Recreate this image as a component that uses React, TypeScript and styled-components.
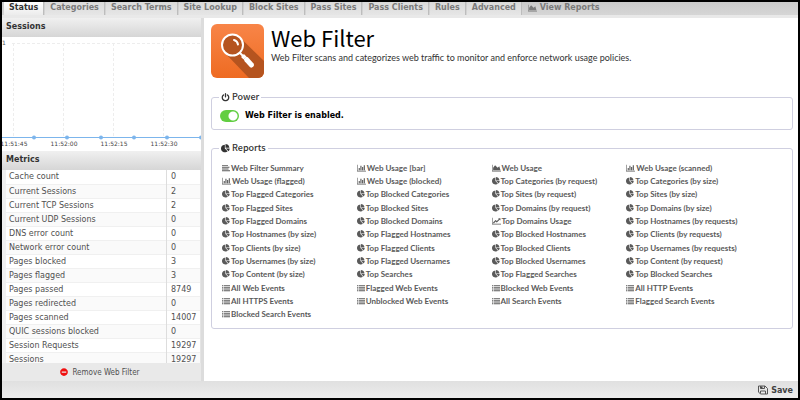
import React from "react";
import styled, { createGlobalStyle, css } from "styled-components";
import { FaMinusCircle } from "react-icons/fa";

const ui = `"DejaVu Sans", Verdana, sans-serif`;
const uiCondensed = `"DejaVu Sans Condensed", "DejaVu Sans", sans-serif`;
const humanist = `"Noto Sans CJK SC", "Source Sans Pro", sans-serif`;
const humanistText = `Lato, "Source Sans Pro", sans-serif`;

const GlobalStyle = createGlobalStyle`
  * { box-sizing: border-box; }
  body { margin: 0; background: #000; font-family: ${ui}; font-size: 8px; color: #505050; }
  button { font: inherit; color: inherit; background: none; border: 0; padding: 0; cursor: pointer; }
`;

const Frame = styled.div`
  height: 100vh;
  padding: 2px;
  display: flex;
  flex-direction: column;
`;

const TabBar = styled.nav`
  flex: none;
  height: 16px;
  display: flex;
  gap: 2px;
  padding-left: 2px;
  background: linear-gradient(#cbcbcb, #d6d6d6);
  border-bottom: 3px solid #e9e9e9;
`;

const Tab = styled.button<{ $active?: boolean; $plain?: boolean }>`
  display: flex;
  align-items: center;
  gap: 3px;
  height: 13px;
  padding: 0 5px 2px;
  font-size: 8px;
  font-weight: bold;
  line-height: 10px;
  white-space: nowrap;
  color: ${(p) => (p.$active ? "#333" : "#7a7a7a")};
  ${(p) =>
    !p.$plain &&
    css`
      background: ${p.$active ? "linear-gradient(#fff, #ececec)" : "linear-gradient(#dadada, #e6e6e6)"};
      box-shadow: 1px 0 0 #bdbdbd;
    `}
`;

const Body = styled.div`
  flex: 1;
  min-height: 0;
  display: flex;
`;

const Sidebar = styled.aside`
  flex: 0 0 25%;
  min-width: 0;
  display: flex;
  flex-direction: column;
  background: #fff;
`;

const PanelTitle = styled.h2`
  flex: none;
  margin: 0;
  height: 19px;
  padding: 0 4px;
  font-size: 8px;
  line-height: 17px;
  color: #333;
  background: linear-gradient(#f0f0f0, #d6d6d6);
`;

const Chart = styled.svg`
  flex: none;
  display: block;
  width: 100%;
  height: auto;
  font-family: ${ui};
  font-size: 6px;
`;

const MetricsScroll = styled.div`
  flex: 1;
  min-height: 0;
  overflow: hidden;
`;

const MetricsTable = styled.table`
  width: 100%;
  border-collapse: collapse;
  table-layout: fixed;
  line-height: 13px;
  tr { height: 14px; border-bottom: 1px solid #f0f0f0; }
  tr:nth-child(even) { background: #fafafa; }
  th, td { padding: 0 4px; font-weight: normal; text-align: left; white-space: nowrap; }
  th { border-left: 4px solid #f0f0f0; padding-left: 3px; }
  td { width: 34px; border-left: 1px solid #ddd; border-right: 1px solid #e4e4e4; }
`;

const RemoveButton = styled.button`
  flex: none;
  height: 18px;
  display: flex;
  align-items: center;
  justify-content: center;
  gap: 4px;
  padding-right: 3px;
  font-family: ${uiCondensed};
  background: #e9e9e9;
  svg { color: #f01010; }
`;

const Splitter = styled.div`
  flex: 0 0 3px;
  background: #dcdcdc;
`;

const Main = styled.main`
  flex: 1;
  min-width: 0;
  padding: 6px 5px 0 7px;
  background: #fff;
  color: #333;
  font-family: ${humanist};
`;

const Header = styled.header`
  display: flex;
  gap: 7px;
  margin-bottom: 13px;
`;

const Title = styled.h1`
  margin: 0;
  font-size: 22px;
  font-weight: normal;
  line-height: 27px;
  color: #000;
`;

const Description = styled.p`
  margin: 0;
  font-family: ${humanistText};
  font-size: 9px;
  line-height: 14px;
`;

const Group = styled.fieldset<{ $roomy?: boolean }>`
  margin: 0 0 12px;
  padding: ${(p) => (p.$roomy ? "7px 31px 7px 10px" : "6px 8px 7px")};
  border: 1px solid #cfcfe0;
  border-radius: 3px;
  min-width: 0;
`;

const Legend = styled.legend<{ $indent?: boolean }>`
  display: flex;
  align-items: center;
  gap: 2px;
  padding: 0 2px;
  margin-left: ${(p) => (p.$indent ? "-1px" : "-3px")};
  font-size: 9px;
  font-weight: 500;
  line-height: 12px;
`;

const PowerRow = styled.label`
  display: flex;
  align-items: center;
  gap: 6px;
  height: 13px;
  font-family: ${ui};
  font-size: 8px;
  font-weight: bold;
  color: #000;
`;

const Toggle = styled.input`
  appearance: none;
  margin: 0;
  width: 19px;
  height: 12px;
  border-radius: 6px;
  background: radial-gradient(circle at 13px 6px, #fff 4px, #62ce42 5px);
`;

const ReportGrid = styled.div`
  display: grid;
  grid-template-columns: repeat(4, 1fr);
  grid-template-rows: repeat(12, 1fr);
  min-height: 160px;
`;

const ReportButton = styled.button`
  display: flex;
  align-items: center;
  gap: 1px;
  min-width: 0;
  white-space: nowrap;
  font-family: ${humanistText};
  font-size: 8px;
  font-weight: bold;
  line-height: 12px;
  color: #5a5a5a;
`;

const Footer = styled.footer`
  flex: none;
  height: 17px;
  display: flex;
  justify-content: flex-end;
  padding-right: 5px;
  background: linear-gradient(#e0e0e0, #ececec);
`;

const SaveButton = styled.button`
  display: flex;
  align-items: center;
  gap: 3px;
  padding-top: 1px;
  font-weight: bold;
  color: #404040;
`;

const glyphs = {
  pie: { w: 1792, d: "M768 890l546 546q-106 108-247.5 168t-298.5 60q-209 0-385.5-103t-279.5-279.5-103-385.5 103-385.5 279.5-279.5 385.5-103v762zm187 6h773q0 157-60 298.5t-168 247.5zm709-128h-768v-768q209 0 385.5 103t279.5 279.5 103 385.5z" },
  bar: { w: 2048, d: "M640 896v512h-256v-512h256zm384-512v1024h-256v-1024h256zm1024 1152v128h-2048v-1536h128v1408h1920zm-640-896v768h-256v-768h256zm384-384v1152h-256v-1152h256z" },
  area: { w: 2048, d: "M2048 1536v128h-2048v-1536h128v1408h1920zm-384-1024l256 896h-1664v-576l448-576 576 576z" },
  line: { w: 2048, d: "M2048 1536v128h-2048v-1536h128v1408h1920zm-128-1248v435q0 21-19.5 29.5t-35.5-7.5l-121-121-633 633q-10 10-23 10t-23-10l-233-233-416 416-192-192 585-585q10-10 23-10t23 10l233 233 464-464-121-121q-16-16-7.5-35.5t29.5-19.5h435q14 0 23 9t9 23z" },
  list: { w: 1792, d: "M0 256h256v192h-256zM384 256h1408v192h-1408zM0 640h256v192h-256zM384 640h1408v192h-1408zM0 1024h256v192h-256zM384 1024h1408v192h-1408zM0 1408h256v192h-256zM384 1408h1408v192h-1408z" },
  text: { w: 1792, d: "M0 256h1344v192h-1344zM0 640h1664v192h-1664zM0 1024h1472v192h-1472zM0 1408h1792v192h-1792z" },
  power: { w: 1792, d: "M1664 896q0 156-61 298t-164 245-245 164-298 61-298-61-245-164-164-245-61-298q0-182 80.5-343t226.5-270q43-32 95.5-25t83.5 50q32 42 24.5 94.500t-49.500 84.500q-98 74-151.500 181t-53.500 228q0 104 40.500 198.500t109.500 163.500 163.500 109.500 198.500 40.500 198.500-40.500 163.500-109.500 109.500-163.500 40.500-198.500q0-121-53.500-228t-151.500-181q-42-32-49.500-84.500t24.500-94.500q31-43 84-50t95 25q146 109 226.500 270t80.500 343zm-640-768v640q0 52-38 90t-90 38-90-38-38-90v-640q0-52 38-90t90-38 90 38 38 90z" },
};
type GlyphName = keyof typeof glyphs;

const GlyphSvg = styled.svg`
  flex: none;
  fill: currentColor;
`;

const Glyph = ({ name, size = 8 }: { name: GlyphName; size?: number }) => {
  const { w, d } = glyphs[name];
  return (
    <GlyphSvg width={w > 1792 ? size + 1 : size} height={size} viewBox={`0 0 ${w} 1792`} aria-hidden="true">
      <path d={d} />
    </GlyphSvg>
  );
};

const SaveIcon = () => (
  <svg width="10" height="10" viewBox="0 0 20 20" fill="none" stroke="#555" strokeWidth="2" aria-hidden="true">
    <path d="M1 2h13l5 5v11H5l-4-4z" />
    <path d="M5 2v5h8V2M5 17v-5h10v6" />
    <path d="M5 3h4v4H5z" fill="#444" stroke="none" />
  </svg>
);

const Logo = () => (
  <svg width="53" height="54" viewBox="0 0 53 54" aria-hidden="true">
    <defs>
      <linearGradient id="logoFill" x1="0" y1="0" x2="0" y2="1">
        <stop offset="0" stopColor="#f88548" />
        <stop offset="1" stopColor="#ee6b22" />
      </linearGradient>
      <clipPath id="logoClip">
        <rect width="53" height="54" rx="6" />
      </clipPath>
    </defs>
    <g clipPath="url(#logoClip)">
      <rect width="53" height="54" fill="url(#logoFill)" />
      <path d="M29 13.500L53 37v17H38L14 29z" fill="#b5541f" />
      <circle cx="21.500" cy="21" r="10.500" fill="#b5541f" stroke="#fff" strokeWidth="2" />
      <path d="M23 16q3.500 1 4 4.500" fill="none" stroke="#fff" strokeWidth="2" strokeLinecap="round" />
      <path d="M28.500 28.500l4 4" stroke="#fff" strokeWidth="2" />
      <path d="M31.500 31.500l2.500 2.500" stroke="#fff" strokeWidth="4" />
      <path d="M35.500 35.500l5 5.500" stroke="#fff" strokeWidth="5" strokeLinecap="round" />
    </g>
  </svg>
);

const tabs = ["Status", "Categories", "Search Terms", "Site Lookup", "Block Sites", "Pass Sites", "Pass Clients", "Rules", "Advanced"];

const metrics: [string, number][] = [
  ["Cache count", 0],
  ["Current Sessions", 2],
  ["Current TCP Sessions", 2],
  ["Current UDP Sessions", 0],
  ["DNS error count", 0],
  ["Network error count", 0],
  ["Pages blocked", 3],
  ["Pages flagged", 3],
  ["Pages passed", 8749],
  ["Pages redirected", 0],
  ["Pages scanned", 14007],
  ["QUIC sessions blocked", 0],
  ["Session Requests", 19297],
  ["Sessions", 19297],
];

const reports: [GlyphName, string][] = [
  ["text", "Web Filter Summary"], ["bar", "Web Usage [bar]"], ["area", "Web Usage"], ["bar", "Web Usage (scanned)"],
  ["bar", "Web Usage (flagged)"], ["bar", "Web Usage (blocked)"], ["pie", "Top Categories (by request)"], ["pie", "Top Categories (by size)"],
  ["pie", "Top Flagged Categories"], ["pie", "Top Blocked Categories"], ["pie", "Top Sites (by request)"], ["pie", "Top Sites (by size)"],
  ["pie", "Top Flagged Sites"], ["pie", "Top Blocked Sites"], ["pie", "Top Domains (by request)"], ["pie", "Top Domains (by size)"],
  ["pie", "Top Flagged Domains"], ["pie", "Top Blocked Domains"], ["line", "Top Domains Usage"], ["pie", "Top Hostnames (by requests)"],
  ["pie", "Top Hostnames (by size)"], ["pie", "Top Flagged Hostnames"], ["pie", "Top Blocked Hostnames"], ["pie", "Top Clients (by requests)"],
  ["pie", "Top Clients (by size)"], ["pie", "Top Flagged Clients"], ["pie", "Top Blocked Clients"], ["pie", "Top Usernames (by requests)"],
  ["pie", "Top Usernames (by size)"], ["pie", "Top Flagged Usernames"], ["pie", "Top Blocked Usernames"], ["pie", "Top Content (by request)"],
  ["pie", "Top Content (by size)"], ["pie", "Top Searches"], ["pie", "Top Flagged Searches"], ["pie", "Top Blocked Searches"],
  ["list", "All Web Events"], ["list", "Flagged Web Events"], ["list", "Blocked Web Events"], ["list", "All HTTP Events"],
  ["list", "All HTTPS Events"], ["list", "Unblocked Web Events"], ["list", "All Search Events"], ["list", "Flagged Search Events"],
  ["list", "Blocked Search Events"],
];

const ticks = ["11:51:45", "11:52:00", "11:52:15", "11:52:30"];
const samples = [32, 65, 99, 132, 165, 199];

const SessionsChart = () => (
  <Chart viewBox="0 0 199 114" role="img" aria-label="Sessions over time">
    <g stroke="#ededed" strokeDasharray="3 2">
      <path d="M10 6.500H199" />
      {ticks.map((t, i) => (
        <path key={t} d={`M${11.5 + i * 50} 6V101`} />
      ))}
    </g>
    <text x="0" y="8" fill="#555">1</text>
    <path d="M0 100.500H199" stroke="#7cb5ec" />
    {samples.map((x) => (
      <circle key={x} cx={x} cy="100.500" r="2" fill="#7cb5ec" />
    ))}
    {ticks.map((t, i) => (
      <text key={t} x={12 + i * 50} y="109" textAnchor="middle" fill="#444">{t}</text>
    ))}
  </Chart>
);

export default function App() {
  return (
    <Frame>
      <GlobalStyle />
      <TabBar>
        {tabs.map((t, i) => (
          <Tab key={t} $active={i === 0}>{t}</Tab>
        ))}
        <Tab $plain><Glyph name="area" />View Reports</Tab>
      </TabBar>
      <Body>
        <Sidebar>
          <PanelTitle>Sessions</PanelTitle>
          <SessionsChart />
          <PanelTitle>Metrics</PanelTitle>
          <MetricsScroll>
            <MetricsTable>
              <colgroup>
                <col />
                <col width="34" />
              </colgroup>
              <tbody>
                {metrics.map(([name, value]) => (
                  <tr key={name}>
                    <th scope="row">{name}</th>
                    <td>{value}</td>
                  </tr>
                ))}
              </tbody>
            </MetricsTable>
          </MetricsScroll>
          <RemoveButton><FaMinusCircle size={8} />Remove Web Filter</RemoveButton>
        </Sidebar>
        <Splitter />
        <Main>
          <Header>
            <Logo />
            <div>
              <Title>Web Filter</Title>
              <Description>Web Filter scans and categorizes web traffic to monitor and enforce network usage policies.</Description>
            </div>
          </Header>
          <Group>
            <Legend $indent><Glyph name="power" size={9} />Power</Legend>
            <PowerRow>
              <Toggle type="checkbox" defaultChecked />
              Web Filter is enabled.
            </PowerRow>
          </Group>
          <Group $roomy>
            <Legend><Glyph name="pie" size={9} />Reports</Legend>
            <ReportGrid>
              {reports.map(([icon, label]) => (
                <ReportButton key={label}><Glyph name={icon} />{label}</ReportButton>
              ))}
            </ReportGrid>
          </Group>
        </Main>
      </Body>
      <Footer>
        <SaveButton><SaveIcon />Save</SaveButton>
      </Footer>
    </Frame>
  );
}
